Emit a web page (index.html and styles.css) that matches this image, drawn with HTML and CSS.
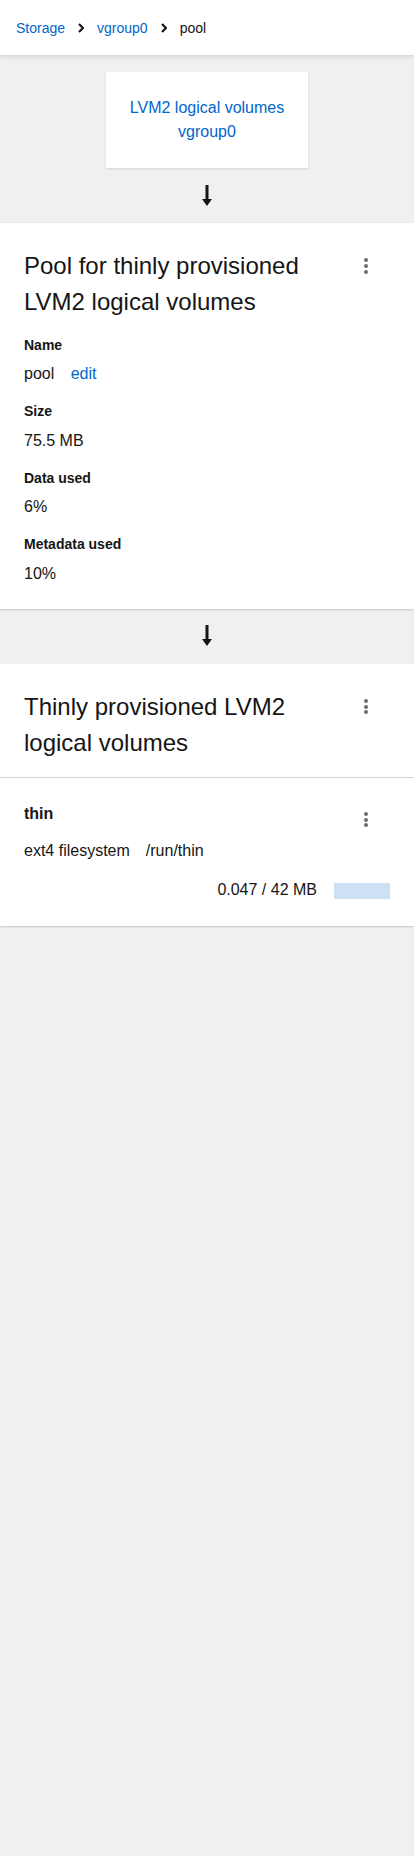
FILE: index.html
```html
<!DOCTYPE html>
<html>
<head>
<meta charset="utf-8">
<link rel="stylesheet" href="styles.css">
</head>
<body>
<header class="topbar">
  <nav class="crumbs">
    <a class="crumb-link" href="#">Storage</a>
    <svg class="chev" viewBox="0 0 6 10" width="6" height="10"><path d="M1 1 L5 5 L1 9" fill="none" stroke="#151515" stroke-width="2.2"/></svg>
    <a class="crumb-link" href="#">vgroup0</a>
    <svg class="chev" viewBox="0 0 6 10" width="6" height="10"><path d="M1 1 L5 5 L1 9" fill="none" stroke="#151515" stroke-width="2.2"/></svg>
    <span class="crumb-current">pool</span>
  </nav>
</header>

<main class="page">
  <div class="parent-wrap">
    <a class="parent-card" href="#">LVM2 logical volumes<br>vgroup0</a>
  </div>
  <div class="arrow-row">
    <svg viewBox="0 0 10 22" width="10" height="22"><path d="M3.5 0 H6.5 V14 H10 L5 21 L0 14 H3.5 Z" fill="#151515"/></svg>
  </div>

  <section class="card">
    <div class="card-head">
      <h2 class="card-title">Pool for thinly provisioned LVM2 logical volumes</h2>
      <span class="kebab"><i></i><i></i><i></i></span>
    </div>
    <dl class="props">
      <dt>Name</dt>
      <dd>pool <a class="edit" href="#">edit</a></dd>
      <dt>Size</dt>
      <dd>75.5 MB</dd>
      <dt>Data used</dt>
      <dd>6%</dd>
      <dt>Metadata used</dt>
      <dd>10%</dd>
    </dl>
  </section>

  <div class="arrow-row">
    <svg viewBox="0 0 10 22" width="10" height="22"><path d="M3.5 0 H6.5 V14 H10 L5 21 L0 14 H3.5 Z" fill="#151515"/></svg>
  </div>

  <section class="card card-list">
    <div class="card-head list-head">
      <h2 class="card-title">Thinly provisioned LVM2 logical volumes</h2>
      <span class="kebab"><i></i><i></i><i></i></span>
    </div>
    <div class="item">
      <div class="item-top">
        <span class="item-name">thin</span>
        <span class="kebab kebab-item"><i></i><i></i><i></i></span>
      </div>
      <div class="item-desc"><span>ext4 filesystem</span><span>/run/thin</span></div>
      <div class="item-usage">
        <span>0.047 / 42 MB</span>
        <span class="bar"><span class="bar-fill" style="width:0.1%"></span></span>
      </div>
    </div>
  </section>
</main>
</body>
</html>
```
FILE: styles.css
```css
* { box-sizing: border-box; }
html, body { margin: 0; padding: 0; }
body {
  background: #f0f0f0;
  font-family: "Liberation Sans", Arial, sans-serif;
  color: #151515;
  font-size: 16px;
  line-height: 24px;
  min-height: 1856px;
}
a { color: #0066cc; text-decoration: none; }

.topbar {
  background: #fff;
  height: 55px;
  display: flex;
  align-items: center;
  padding-left: 16px;
  box-shadow: 0 2px 4px rgba(0,0,0,0.12);
  position: relative;
  z-index: 1;
}
.crumbs {
  display: flex;
  align-items: center;
  font-size: 14px;
  line-height: 21px;
  gap: 13px;
  margin-top: 1px;
}
.chev { display: block; }
.crumb-current { color: #151515; }

.page { display: flex; flex-direction: column; }
.parent-wrap {
  display: flex;
  justify-content: center;
  padding-top: 17px;
}
.parent-card {
  width: 202px;
  height: 96px;
  background: #fff;
  display: flex;
  align-items: center;
  justify-content: center;
  text-align: center;
  font-size: 16px;
  line-height: 24px;
  box-shadow: 0 1px 2px rgba(0,0,0,0.12);
}
.arrow-row {
  height: 55px;
  display: flex;
  align-items: center;
  justify-content: center;
}
.arrow-row svg { display: block; margin-left: 0; }

.card {
  background: #fff;
  box-shadow: 0 1px 2px rgba(0,0,0,0.18);
}
.card-head {
  display: flex;
  align-items: flex-start;
  justify-content: space-between;
  padding: 25px 24px 0 24px;
}
.card-title {
  margin: 0;
  font-size: 24px;
  line-height: 36px;
  font-weight: 400;
  width: 300px;
}
.kebab {
  width: 48px;
  height: 36px;
  display: flex;
  flex-direction: column;
  align-items: center;
  justify-content: center;
  gap: 1.6px;
  flex: none;
}
.kebab i {
  display: block;
  width: 4px;
  height: 4px;
  border-radius: 50%;
  background: #6a6e73;
}

.props {
  margin: 0;
  padding: 14.5px 24px 23px 24px;
}
.props dt {
  font-size: 14px;
  line-height: 21px;
  font-weight: 700;
  margin-bottom: 6.5px;
}
.props dd {
  margin: 0 0 15px 0;
  font-size: 16px;
  line-height: 24px;
}
.props dd:last-child { margin-bottom: 0; }
.edit { margin-left: 12px; }

.list-head {
  padding-bottom: 16px;
  border-bottom: 1px solid #d2d2d2;
}
.item {
  padding: 24px 24px 24px 24px;
}
.item-top {
  display: flex;
  justify-content: space-between;
  align-items: center;
  height: 24px;
}
.item-name {
  font-weight: 700;
  font-size: 16px;
  line-height: 24px;
}
.kebab-item { margin-top: 12px; }
.item-desc {
  margin-top: 13px;
  display: flex;
  gap: 16px;
  font-size: 16px;
  line-height: 24px;
}
.item-usage {
  margin-top: 15px;
  display: flex;
  justify-content: flex-end;
  align-items: center;
  gap: 17px;
  height: 24px;
}
.bar {
  display: block;
  width: 56px;
  height: 16px;
  background: #cde0f4;
  margin-top: 2px;
}
.bar-fill {
  display: block;
  height: 100%;
  background: #0066cc;
}
```
